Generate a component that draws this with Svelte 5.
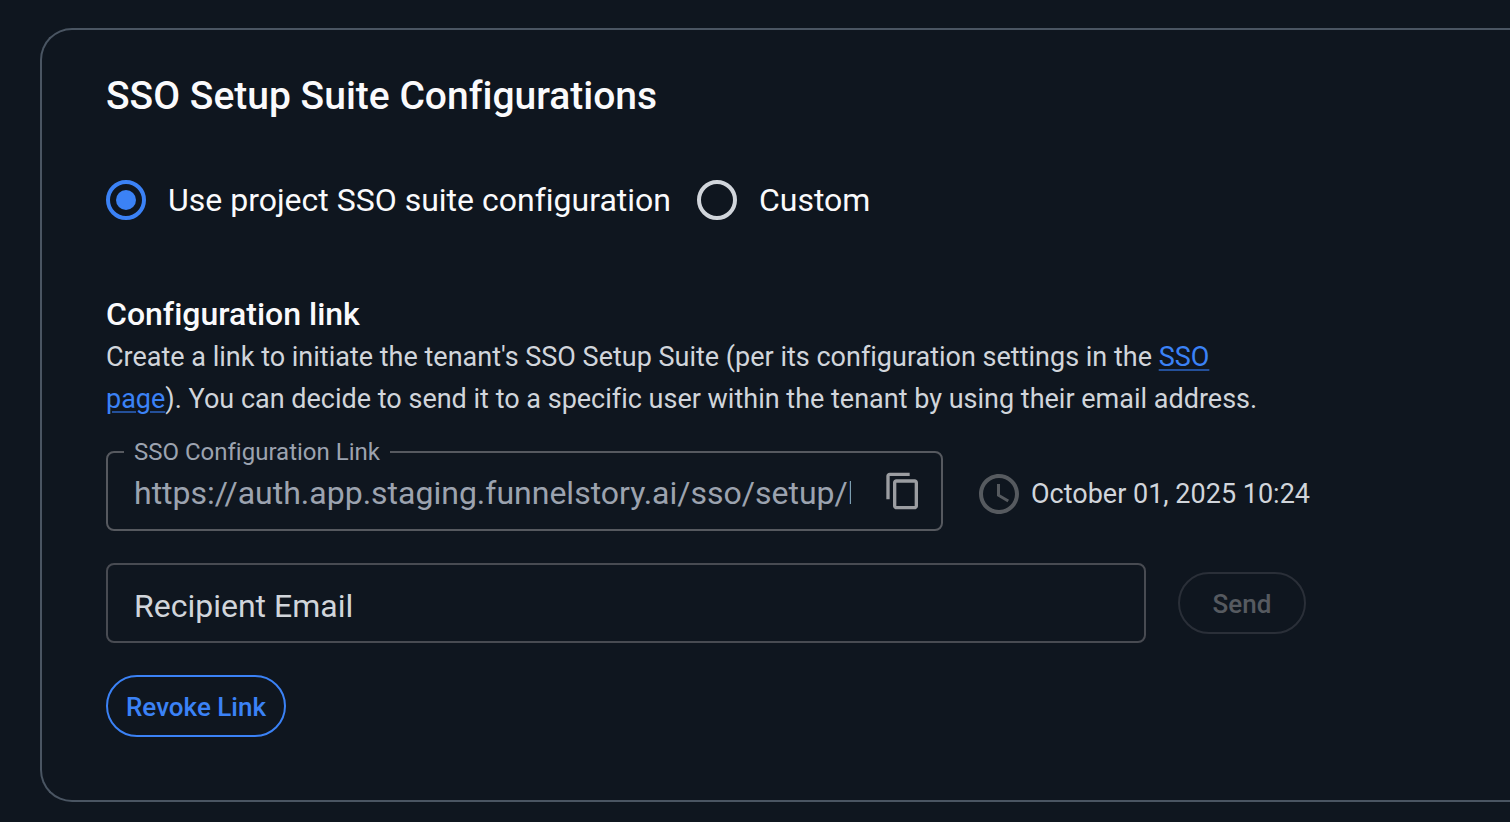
<script lang="ts">
  let mode = $state('project');
  let link = $state('https://auth.app.staging.funnelstory.ai/sso/setup/b');
  let email = $state('');

  const modes = [
    { value: 'project', label: 'Use project SSO suite configuration' },
    { value: 'custom', label: 'Custom' }
  ];

  const expires = 'October 01, 2025 10:24';

  function copyLink() {
    navigator.clipboard?.writeText(link);
  }

  function revoke() {
    link = '';
  }
</script>

<main>
  <section class="panel" aria-labelledby="suite-title">
    <div class="content">
      <h1 id="suite-title">SSO Setup Suite Configurations</h1>

      <div class="modes" role="radiogroup" aria-labelledby="suite-title">
        {#each modes as m}
          <label class="mode">
            <input type="radio" name="mode" value={m.value} bind:group={mode} />
            <span>{m.label}</span>
          </label>
        {/each}
      </div>

      <h2>Configuration link</h2>
      <p>
        Create a link to initiate the tenant's SSO Setup Suite (per its configuration settings in the
        <a href="#sso">SSO page</a>). You can decide to send it to a specific user within the tenant by
        using their email address.
      </p>

      <div class="row link-row">
        <fieldset>
          <legend><label for="link">SSO Configuration Link</label></legend>
          <div class="link-box">
            <input id="link" type="text" readonly value={link} />
            <button class="copy" type="button" aria-label="Copy link" onclick={copyLink}>
              <svg viewBox="0 0 24 24" aria-hidden="true">
                <path d="M16 1H4c-1.1 0-2 .9-2 2v14h2V3h12V1zm3 4H8c-1.1 0-2 .9-2 2v14c0 1.1.9 2 2 2h11c1.1 0 2-.9 2-2V7c0-1.1-.9-2-2-2zm0 16H8V7h11v14z" />
              </svg>
            </button>
          </div>
        </fieldset>
        <div class="expiry">
          <svg viewBox="0 0 24 24" aria-hidden="true">
            <path d="M11.99 2C6.47 2 2 6.48 2 12s4.47 10 9.99 10C17.52 22 22 17.52 22 12S17.52 2 11.99 2zM12 20c-4.42 0-8-3.58-8-8s3.58-8 8-8 8 3.58 8 8-3.58 8-8 8zm.5-13H11v6l5.25 3.15.75-1.23-4.5-2.67z" />
          </svg>
          <time datetime="2025-10-01T10:24">{expires}</time>
        </div>
      </div>

      <div class="row email-row">
        <input class="email" type="email" placeholder="Recipient Email" aria-label="Recipient Email" bind:value={email} />
        <button class="pill send" type="button" disabled={!email}>Send</button>
      </div>

      <button class="pill revoke" type="button" onclick={revoke}>Revoke Link</button>
    </div>
  </section>
</main>

<style>
  :global(body) { margin: 0; background: #0f161f; }

  main {
    padding: 28px 0 20px 40px;
    overflow: hidden;
    font-family: Roboto, 'Liberation Sans', sans-serif;
    font-variant-ligatures: none;
    color: #fafafc;
  }

  .panel {
    padding: 42px 64px 63px;
    border: 2px solid #4a5562;
    border-right: 0;
    border-radius: 32px 0 0 32px;
  }
  .content { max-width: 1200px; }

  h1 { margin: 0 0 60px; font-size: 39px; line-height: 48px; font-weight: 500; }

  .modes { display: flex; gap: 26px; margin-bottom: 72px; }
  .mode { display: flex; align-items: center; gap: 22px; font-size: 32px; line-height: 40px; }
  .mode input {
    appearance: none;
    display: grid;
    place-items: center;
    width: 40px;
    height: 40px;
    margin: 0;
    border: 4px solid #d1d5db;
    border-radius: 50%;
  }
  .mode input:checked { border-color: #3b82f6; }
  .mode input:checked::before { content: ''; width: 20px; height: 20px; border-radius: 50%; background: #3b82f6; }

  h2 { margin: 0; font-size: 32px; line-height: 44px; font-weight: 500; }
  p { max-width: 1170px; margin: 0 0 20px; font-size: 27px; line-height: 42px; color: #d1d5db; }
  a { color: #3b82f6; text-decoration-color: #24509a; text-decoration-thickness: 2px; text-underline-offset: 3px; }

  .row { display: flex; gap: 32px; }

  fieldset {
    flex: 1;
    min-width: 0;
    margin: 0;
    padding: 0 18px 0 16px;
    border: 2px solid #56595f;
    border-radius: 8px;
  }
  legend { padding: 0 10px; font-size: 24px; line-height: 24px; color: #9ca3af; }
  .link-box { display: flex; align-items: center; gap: 32px; box-sizing: border-box; height: 65px; padding: 0 0 12px 10px; }
  .link-box input {
    flex: 1;
    min-width: 0;
    padding: 4px 0 0;
    border: 0;
    outline: 0;
    background: none;
    font: inherit;
    font-size: 32px;
    line-height: 40px;
    color: #9ca3af;
  }
  .copy { padding: 0; border: 0; background: none; cursor: pointer; }
  .copy svg { display: block; width: 40px; height: 40px; fill: #9b9da1; }

  .expiry { display: flex; flex: 0 0 331px; align-items: center; gap: 8px; min-width: 0; padding-top: 16px; font-size: 27px; color: #d1d5db; white-space: nowrap; }
  .expiry svg { flex: none; width: 48px; height: 48px; fill: #565a5f; }

  .email-row { align-items: center; margin: 32px 0; }
  .email {
    flex: 1;
    min-width: 0;
    box-sizing: border-box;
    height: 80px;
    padding: 6px 26px 0;
    border: 2px solid #484b52;
    border-radius: 8px;
    background: none;
    font: inherit;
    font-size: 32px;
    color: #d1d5db;
  }
  .email::placeholder { color: #d1d5db; opacity: 1; }

  .pill {
    box-sizing: border-box;
    height: 62px;
    padding: 2px 18px 0;
    border: 2px solid #3b82f6;
    border-radius: 31px;
    background: none;
    font: inherit;
    font-size: 26px;
    font-weight: 500;
    color: #3b82f6;
    cursor: pointer;
  }
  .send { min-width: 128px; }
  .send:disabled { border-color: #2a2f38; color: #565a60; cursor: default; }
</style>
